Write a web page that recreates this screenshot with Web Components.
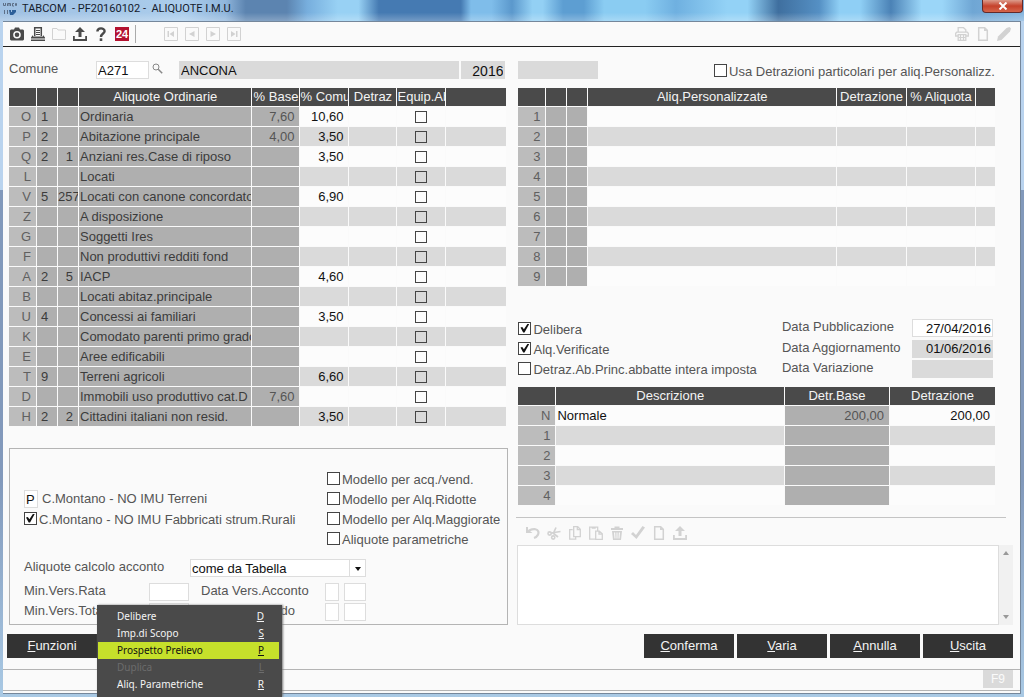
<!DOCTYPE html>
<html lang="it">
<head>
<meta charset="utf-8">
<title>TABCOM - Aliquote I.M.U.</title>
<style>
  body { margin: 0; background: #fafafa; color: #555; font: 13px/18px "Liberation Sans", Arial, sans-serif; }
</style>
</head>
<body>
<aliquote-page></aliquote-page>

<script>
/* ---------- icons: 14 x 14 drawings that take the current colour ---------- */
const ICONS = {
  camera: '<path fill="currentColor" fill-rule="evenodd" d="M1 2.500h3l1-2h4l1 2h3l1 1v9l-1 1H1l-1-1v-9zM7 4a3.800 3.800 0 1 0 0 7.600a3.800 3.800 0 1 0 0-7.600zM7 5.500a2.300 2.300 0 1 1 0 4.600a2.300 2.300 0 1 1 0-4.600z"/>',
  printer: '<path fill="none" stroke="currentColor" stroke-width="1.500" d="M3.700 9V.8h6.600V9"/><path stroke="currentColor" d="M5 3.500h4M5 5.500h4M5 7.500h4"/><path fill="currentColor" d="M0 10.500L2 8v1.500h10V8l2 2.500V11.500H0zM0 12.500h14V14H0z"/>',
  folder: '<path fill="none" stroke="currentColor" d="M.5 1.500h4.500l1 1.500h7.500v9.500H.5z"/>',
  upload: '<path fill="currentColor" d="M7 0l5 5H8.500v5h-3V5H2zM0 9h1.800v3h10.400V9H14v5H0z"/>',
  help: '<path fill="none" stroke="currentColor" stroke-width="2.400" d="M3.400 4.600C3.400.4 10.600.4 10.600 4.300C10.600 6.600 7 6.600 7 10"/><path fill="currentColor" d="M5.700 11.300h2.600V14H5.700z"/>',
  first: '<path fill="none" stroke="currentColor" d="M.5.5h13v13H.5z"/><path fill="currentColor" d="M3.500 4H5v6H3.500zM10 4v6L5.500 7z"/>',
  prev: '<path fill="none" stroke="currentColor" d="M.5.5h13v13H.5z"/><path fill="currentColor" d="M9.500 4v6L4 7z"/>',
  next: '<path fill="none" stroke="currentColor" d="M.5.5h13v13H.5z"/><path fill="currentColor" d="M4.500 4v6L10 7z"/>',
  last: '<path fill="none" stroke="currentColor" d="M.5.5h13v13H.5z"/><path fill="currentColor" d="M9 4h1.500v6H9zM4 4v6l4.500-3z"/>',
  print: '<path fill="none" stroke="currentColor" stroke-width="1.300" d="M3.200 5V.7h5.300l2.300 2V5M3.200 9H.7V6.200l1-1h10.600l1 1V9h-2.500M3.200 7.700h7.600v5.600H3.200z"/><path stroke="currentColor" stroke-width="1.200" d="M5.500 8v5M8.500 8v5M3.500 10.500h7"/>',
  page: '<path fill="none" stroke="currentColor" stroke-width="1.500" d="M2.700.8h6l2.600 2.600v9.800H2.700z"/><path fill="currentColor" d="M8 .5l3.500 3.500H8z"/>',
  pencil: '<path fill="currentColor" d="M0 14l1-4.500L9.500 1l3-1L14 1.500l-1 3L4.500 13z"/>',
  undo: '<path fill="none" stroke="currentColor" stroke-width="2.200" d="M3 4.500C14-.5 15 9.500 8 12"/><path fill="currentColor" d="M0 1h2v2.500L6.500 7H0z"/>',
  cut: '<path fill="none" stroke="currentColor" stroke-width="1.700" d="M4 7l9.500-1.500M6.500 7L9 1.500M6 7l5 4"/><circle cx="2.600" cy="7.500" r="1.600" fill="none" stroke="currentColor" stroke-width="1.600"/><circle cx="6.200" cy="11.500" r="1.600" fill="none" stroke="currentColor" stroke-width="1.600"/>',
  copy: '<path fill="none" stroke="currentColor" stroke-width="1.300" d="M4.700 3.700h-3v9.500h6v-2.500M5.700.7h4l2.600 2.600v7.400H5.700zM9.300.7v3h3"/>',
  paste: '<path fill="none" stroke="currentColor" stroke-width="1.300" d="M6 13.200H.7V1.200h8V5M2.700 2h4M6.700 5.200h3.600l3 2.600v5.500H6.700zM10 5.200v3h3"/>',
  trash: '<path fill="currentColor" fill-rule="evenodd" d="M1 2h3.500V.5h5V2H13v2H1zM2 5h10l-1 9H3zM4 6.500l.5 6h1l-.3-6zM6.500 6.500v6h1v-6zM8.800 6.500l-.3 6h1l.5-6z"/>',
  check: '<path fill="currentColor" d="M0 8l2-2 3 3 6.500-9L14 1.500 5.500 13z"/>',
  lens: '<circle cx="5" cy="5" r="3" fill="none" stroke="currentColor"/><path stroke="currentColor" stroke-width="1.500" d="M7.200 7.200l4 4"/>',
  logo: '<path fill="none" stroke="#5d6f86" stroke-width="1" d="M.5 1v2.500h2V1M4.500 4V1.500h3V4M6 1.500V4M11 1.500H9.500v2.500H11M12.500 1.500h1v2h-1zM1.500 8v4M4.500 8v4"/><path fill="#2d5f99" d="M6 8h2v2h1V8h4v2l-3 3H7z"/>'
};
const icon = (name, size = 14) =>
  `<svg width="${size}" height="${size}" viewBox="0 0 14 14" aria-hidden="true">${ICONS[name]}</svg>`;

class BaseElement extends HTMLElement {
  connectedCallback() {
    if (this.shadowRoot) return;
    this.attachShadow({ mode: 'open' }).innerHTML = this.render();
  }
  attr(name, fallback = '') { return this.getAttribute(name) ?? fallback; }
}

/* a row of icon buttons: <tool-strip icons="undo cut"> */
customElements.define('tool-strip', class extends BaseElement {
  render() {
    return `<style>
      :host { display: flex; gap: 7px; align-items: center; color: #4a4a4a; }
      :host([muted]) { color: #d2d2d2; }
      button { display: flex; padding: 0; border: 0; background: none; color: inherit; width: 14px; height: 14px; }
      button.faint { color: #d2d2d2; }
    </style>` + this.attr('icons').split(' ').map(n =>
      `<button type="button" aria-label="${n}" class="${n === 'folder' ? 'faint' : ''}">${icon(n)}</button>`).join('');
  }
});

/* tick box with its label */
customElements.define('check-field', class extends BaseElement {
  render() {
    return `<style>
      :host { display: block; }
      label { display: flex; align-items: center; gap: 2px; height: 20px; white-space: nowrap; }
      input { appearance: none; flex: none; width: 13px; height: 13px; margin: 0 0 2px; border: 1px solid #444; background: #fff; display: grid; place-items: center; }
      input:checked::before { content: ""; width: 9px; height: 9px; background: #111; clip-path: polygon(0 45%, 20% 40%, 38% 65%, 80% 0, 100% 0, 45% 100%, 30% 100%); }
      span { padding-top: 2px; }
    </style><label><input type="checkbox" ${this.hasAttribute('checked') ? 'checked' : ''}><span>${this.attr('label')}</span></label>`;
  }
});

/* single-line box, optionally with its label in front */
customElements.define('text-field', class extends BaseElement {
  render() {
    const label = this.attr('label');
    return `<style>
      :host { display: flex; justify-content: space-between; min-width: 0; }
      label { white-space: nowrap; line-height: 16px; }
      input { box-sizing: border-box; width: var(--box, 100%); height: 18px; margin: 0; padding: 1px 1px 0; border: 1px solid #ddd;
              border-radius: 0; background: #fff; color: #111; font: inherit; text-align: var(--align, left); min-width: 0; }
      input[readonly] { border-color: #dadada; background: #dadada; }
    </style>${label ? `<label for="f">${label}</label>` : ''}
    <input id="f" type="text" value="${this.attr('value')}" ${label ? '' : `aria-label="${this.attr('name')}"`} ${this.hasAttribute('readonly') ? 'readonly' : ''}>`;
  }
});

customElements.define('cmd-button', class extends BaseElement {
  render() {
    const t = this.attr('label');
    return `<style>
      :host { display: block; width: 90px; }
      button { width: 100%; height: 24px; padding: 0; border: 0; background: #333; color: #f4f4f4; font: 13px/24px "Liberation Sans", Arial, sans-serif; }
    </style><button type="button"><u>${t[0]}</u>${t.slice(1)}</button>`;
  }
});

/* table of data; columns: [title, width, cell class, header class] */
const GRIDS = {
  ordinarie: {
    cols: [['', 28, 'key r'], ['', 21, 'fix c1'], ['', 21, 'fix r'], ['Aliquote Ordinarie', 0, 'fix'], ['% Base', 48, 'fix base r'],
           ['% Comu', 49, 'r', 'l'], ['Detraz', 48, 'r'], ['Equip.Ab', 49, 'tick', 'l'], ['', 60, '']],
    rows: `O|1||Ordinaria|7,60|10,60
P|2||Abitazione principale|4,00|3,50
Q|2|1|Anziani res.Case di riposo||3,50
L|||Locati||
V|5|257|Locati con canone concordato||6,90
Z|||A disposizione||
G|||Soggetti Ires||
F|||Non produttivi redditi fond||
A|2|5|IACP||4,60
B|||Locati abitaz.principale||
U|4||Concessi ai familiari||3,50
K|||Comodato parenti primo grado||
E|||Aree edificabili||
T|9||Terreni agricoli||6,60
D|||Immobili uso produttivo cat.D|7,60|
H|2|2|Cittadini italiani non resid.||3,50`
  },
  personalizzate: {
    cols: [['', 28, 'key r'], ['', 21, 'fix'], ['', 21, 'fix'], ['Aliq.Personalizzate', 0, ''], ['Detrazione', 70, 'r'], ['% Aliquota', 69, 'r'], ['', 19, '']],
    rows: '1\n2\n3\n4\n5\n6\n7\n8\n9'
  },
  detrazioni: {
    cols: [['', 38, 'key r'], ['Descrizione', 0, ''], ['Detr.Base', 105, 'fix base r'], ['Detrazione', 105, 'r']],
    rows: 'N|Normale|200,00|200,00\n1\n2\n3\n4'
  }
};
customElements.define('data-grid', class extends BaseElement {
  render() {
    const { cols, rows } = GRIDS[this.attr('source')];
    const head = cols.map(c => `<th class="${c[3] || ''}">${c[0]}</th>`).join('');
    const body = rows.split('\n').map(line => {
      const v = line.split('|');
      return '<tr>' + cols.map((c, i) => `<td class="${c[2]}">${c[2] === 'tick'
        ? `<input type="checkbox" aria-label="Equip.Ab. ${v[0]}">` : v[i] || ''}</td>`).join('') + '</tr>';
    }).join('');
    return `<style>
      :host { display: block; }
      table { width: 100%; table-layout: fixed; border-collapse: separate; border-spacing: 0; }
      th, td { box-sizing: border-box; padding: 0 0 0 1px; overflow: hidden; white-space: nowrap; text-align: left;
               border-right: 1px solid #fafafa; border-bottom: 1px solid #fafafa; }
      th:last-child, td:last-child { border-right: 0; }
      th { height: 19px; padding: 0; background: #4a4a4a; color: #f4f4f4; font-weight: 400; line-height: 18px; text-align: center; }
      th.l { text-align: left; }
      td { height: 20px; line-height: 18px; color: #111; background: #fcfcfc; }
      tr:nth-child(even) td { background: #dadada; }
      tbody tr td.fix { background: #afafaf; color: #3c3c3c; }
      tbody tr td.base { color: #555; }
      tbody tr td.key { background: #bcbcbc; color: #606060; }
      td.r { text-align: right; padding: 0 5px 0 0; }
      td.c1 { padding-left: 4px; }
      td.tick { padding: 0; text-align: center; line-height: 0; }
      input { appearance: none; box-sizing: border-box; width: 12px; height: 12px; margin: 0; border: 1px solid #444; vertical-align: middle; }
    </style><table><colgroup>${cols.map(c => `<col${c[1] ? ` style="width:${c[1]}px"` : ''}>`).join('')}</colgroup>
    <thead><tr>${head}</tr></thead><tbody>${body}</tbody></table>`;
  }
});

customElements.define('popup-menu', class extends BaseElement {
  render() {
    const items = [['Delibere', 'D'], ['Imp.di Scopo', 'S'], ['Prospetto Prelievo', 'P', 'on'], ['Duplica', 'L', 'off'], ['Aliq. Parametriche', 'R']];
    return `<style>
      :host { display: block; box-sizing: border-box; width: 185px; height: 92px; padding: 3px 3px 0 1px; background: #4a4a4a; box-shadow: 1px 0 2px #777; }
      button { display: flex; justify-content: space-between; width: 100%; height: 17px; padding: 0 15px 0 19px; border: 0; background: none; color: #f4f4f4;
               font: 10px/17px "Noto Sans", "Open Sans", sans-serif; white-space: nowrap; }
      button.on { background: #c6e02b; color: #111; }
      button.off { color: #6c6c6c; }
    </style>` + items.map(i => `<button type="button" role="menuitem" class="${i[2] || ''}" ${i[2] === 'off' ? 'disabled' : ''}><span>${i[0]}</span><u>${i[1]}</u></button>`).join('');
  }
});

/* window frame: glass title bar, tool bar, slotted body, status bar */
customElements.define('app-window', class extends BaseElement {
  render() {
    return `<style>
      :host { display: block; box-sizing: border-box; min-height: 100vh; padding: 0 3px 3px; overflow: hidden;
              background: linear-gradient(#b9d3ee 0 190px, #8299bb 190px 210px, #8299bb 480px, #a9c9e4 697px); }
      header { display: flex; align-items: center; height: 21px; margin: 0 -3px; padding-left: 3px; color: #15202c; font: 11px/18px Roboto, "Noto Sans", sans-serif;
        background: linear-gradient(#fff0 0 60%, #ffffff40), linear-gradient(90deg, #9fc0e2 0, #abcdec 18%, #90b6dc 22%, #5c84b0 24%, #5c84b0 28%, #77aedd 30%, #98d1f4 33%, #98d1f4 35%, #457ab2 37%, #457ab2 45%,
          #7fbdea 46%, #7fbdea 48%, #5b98cc 50%, #93d0f4 52%, #93d0f4 53%, #5d9ed2 55%, #5d9ed2 57%, #8accf2 59%, #8accf2 63%, #6fb0e0 66%, #93d2f6 71%, #93d2f6 73%, #3f6f9f 76%, #5590c4 80%, #8fcff5 82%, #8fcff5 84%, #4b82b6 87%, #9bd6f8 90%, #9bd6f8 92%, #6fa6d4 95%, #86b5de 100%); }
      h1 { flex: 1; margin: 0; padding: 0 0 4px 5px; font: inherit; white-space: pre; }
      .logo { display: flex; padding-bottom: 4px; }
      .close { align-self: flex-start; width: 41px; height: 13px; margin-right: 1px; padding: 0; border: 1px solid #632a2a; border-top: 0; border-radius: 0 0 4px 4px; color: #fff; background: linear-gradient(#dc9c8c, #c5412b 50%, #d4654b);
        display: grid; place-items: center; }
      .frame { border: 1px solid #75879b; border-width: 1px 1px 1px 0; background: #fafafa; min-height: calc(100vh - 26px); }
      .tools { display: flex; align-items: center; height: 24px; padding: 0 9px 0 7px; border-bottom: 1px solid #222; }
      .h24 { width: 14px; height: 14px; margin: 0 6px 0 7px; padding: 0; border: 0; background: #b3122f; color: #fff; font: bold 11px/14px "Liberation Sans", Arial, sans-serif; }
      .sep { width: 1px; height: 18px; margin-right: 28px; background: #aaa; }
      .right { margin-left: auto; }
      .status { display: flex; justify-content: flex-end; height: 20px; margin-top: 11px; padding-right: 7px; border: 1px solid #b4b4b4; border-width: 1px 0; }
      .status span { width: 30px; height: 18px; background: #dadada; color: #fafafa; text-align: center; font-size: 12px; }
    </style>
    <header><span class="logo">${icon('logo')}</span><h1><slot name="title"></slot></h1>
      <button class="close" type="button" aria-label="Chiudi"><svg width="10" height="8" viewBox="0 0 10 8"><path d="M1.500.5l7 7M8.500.5l-7 7" stroke="#fff" stroke-width="2"/></svg></button></header>
    <div class="frame">
      <div class="tools"><tool-strip icons="camera printer folder upload help"></tool-strip>
        <button class="h24" type="button">24</button><span class="sep"></span>
        <tool-strip muted icons="first prev next last"></tool-strip>
        <tool-strip muted class="right" icons="print page pencil"></tool-strip></div>
      <slot></slot>
      <div class="status"><span>F9</span></div>
    </div>`;
  }
});

customElements.define('aliquote-page', class extends BaseElement {
  render() {
    return `<style>
      :host { display: block; }
      main { padding: 14px 7px 0 6px; }
      .cols { display: grid; grid-template-columns: 500fr 495fr; gap: 0 10px; }
      .top { display: flex; align-items: flex-start; height: 18px; margin-bottom: 9px; color: #555; }
      .top.l { margin-right: 3px; }
      .caption { flex: none; width: 87px; line-height: 16px; }
      .code { width: 53px; } .city { flex: 1; margin-right: 2px; } .year { width: 44px; --align: right; font-size: 14px; }
      .lens { display: flex; width: 30px; padding: 1px 0 0 2px; box-sizing: border-box; color: #888; }
      button.lens { border: 0; background: none; }
      .blank { width: 80px; margin-right: auto; }
      .inset { margin-right: 18px; }
      .lg { margin-right: 2px; }
      fieldset { margin: 21px 0 0; padding: 20px 0 0 14px; border: 1px solid #b4b4b4; height: 177px; box-sizing: border-box; min-width: 0; }
      .opts { display: grid; grid-template-columns: 303px 1fr; grid-template-rows: repeat(4, 20px); grid-auto-flow: column; }
      .p { display: flex; align-items: center; gap: 4px; } .p text-field { width: 14px; }
      .acc { display: flex; margin: 10px 0 6px; } .acc label { width: 166px; line-height: 16px; }
      select { appearance: none; width: 176px; height: 18px; padding: 1px 1px 0; border: 1px solid #ddd; border-radius: 0; color: #111; font: inherit; line-height: 16px;
        background: linear-gradient(#ddd, #ddd) calc(100% - 15px) 0 / 1px 100% no-repeat, #fff; }
      .sel { position: relative; display: flex; }
      .sel::after { content: ""; position: absolute; right: 5px; top: 8px; border: 3px solid transparent; border-top: 4px solid #111; border-bottom: 0; pointer-events: none; }
      .vers { display: flex; height: 20px; }
      .vers .a { width: 165px; margin-right: 12px; --box: 40px; }
      .vers .b { width: 138px; margin-right: 5px; --box: 14px; }
      .vers .c { width: 22px; }
      .mid { display: grid; grid-template-columns: 1fr 211px; margin: 32px 20px 8px 0; }
      .dates { display: grid; gap: 2px; --box: 81px; --align: right; }
      .rule { margin: 11px 7px 0 -2px; border-top: 1px solid #c4c4c4; }
      .edit { padding: 8px 0 5px 8px; }
      textarea { display: block; box-sizing: border-box; width: 100%; height: 80px; margin: 0; border: 1px solid #ddd; resize: none; background: #fff; overflow: hidden; }
      .memo { display: grid; grid-template-columns: 1fr 14px; margin-left: -1px; }
      .bar { display: flex; flex-direction: column; justify-content: space-between; align-items: center; padding: 6px 0; background: #f1f1f1; }
      .bar i { border: 3px solid transparent; border-bottom: 4px solid #999; border-top: 0; }
      .bar i:last-child { transform: rotate(180deg); }
      .cmds { display: flex; gap: 3px; margin: 9px 0 0 -2px; }
      .owner { position: relative; margin-right: auto; }
      popup-menu { position: absolute; left: 90px; top: -29px; }
    </style>
    <app-window>
      <span slot="title">TABCOM  - PF20160102 -  ALIQUOTE I.M.U.</span>
      <main>
        <div class="cols">
          <section>
            <div class="top l"><span class="caption">Comune</span><text-field class="code" name="Comune" value="A271"></text-field>
              <button class="lens" type="button" aria-label="Cerca">${icon('lens')}</button>
              <text-field class="city" name="Nome comune" value="ANCONA" readonly></text-field>
              <text-field class="year" name="Anno" value="2016" readonly></text-field></div>
            <data-grid class="lg" source="ordinarie"></data-grid>
            <fieldset>
              <div class="opts"><span></span>
                <div class="p"><text-field name="C.Montano - NO IMU Terreni" value="P"></text-field>C.Montano - NO IMU Terreni</div>
                <check-field checked label="C.Montano - NO IMU Fabbricati strum.Rurali"></check-field><span></span>
                <check-field label="Modello per acq./vend."></check-field>
                <check-field label="Modello per Alq.Ridotte"></check-field>
                <check-field label="Modello per Alq.Maggiorate"></check-field>
                <check-field label="Aliquote parametriche"></check-field></div>
              <div class="acc"><label for="acc">Aliquote calcolo acconto</label><span class="sel"><select id="acc"><option>come da Tabella</option></select></span></div>
              <div class="vers"><text-field class="a" label="Min.Vers.Rata"></text-field><text-field class="b" label="Data Vers.Acconto"></text-field><text-field class="c" name="Mese acconto"></text-field></div>
              <div class="vers"><text-field class="a" label="Min.Vers.Totale"></text-field><text-field class="b" label="Data Vers.Saldo"></text-field><text-field class="c" name="Mese saldo"></text-field></div>
            </fieldset>
          </section>
          <section>
            <div class="top inset"><text-field class="blank" name="Stato" readonly></text-field>
              <check-field label="Usa Detrazioni particolari per aliq.Personalizz."></check-field></div>
            <data-grid class="inset" source="personalizzate"></data-grid>
            <div class="mid">
              <div><check-field checked label="Delibera"></check-field><check-field checked label="Alq.Verificate"></check-field>
                <check-field label="Detraz.Ab.Princ.abbatte intera imposta"></check-field></div>
              <div class="dates"><text-field label="Data Pubblicazione" value="27/04/2016"></text-field>
                <text-field label="Data Aggiornamento" value="01/06/2016" readonly></text-field>
                <text-field label="Data Variazione" readonly></text-field></div>
            </div>
            <data-grid class="inset" source="detrazioni"></data-grid>
            <div class="rule"></div>
            <tool-strip class="edit" muted icons="undo cut copy paste trash check page upload"></tool-strip>
            <div class="memo"><textarea aria-label="Note"></textarea><span class="bar"><i></i><i></i></span></div>
          </section>
        </div>
        <div class="cmds"><div class="owner"><cmd-button label="Funzioni"></cmd-button><popup-menu></popup-menu></div>
          <cmd-button label="Conferma"></cmd-button><cmd-button label="Varia"></cmd-button><cmd-button label="Annulla"></cmd-button><cmd-button label="Uscita"></cmd-button></div>
      </main>
    </app-window>`;
  }
});
</script>
</body>
</html>
